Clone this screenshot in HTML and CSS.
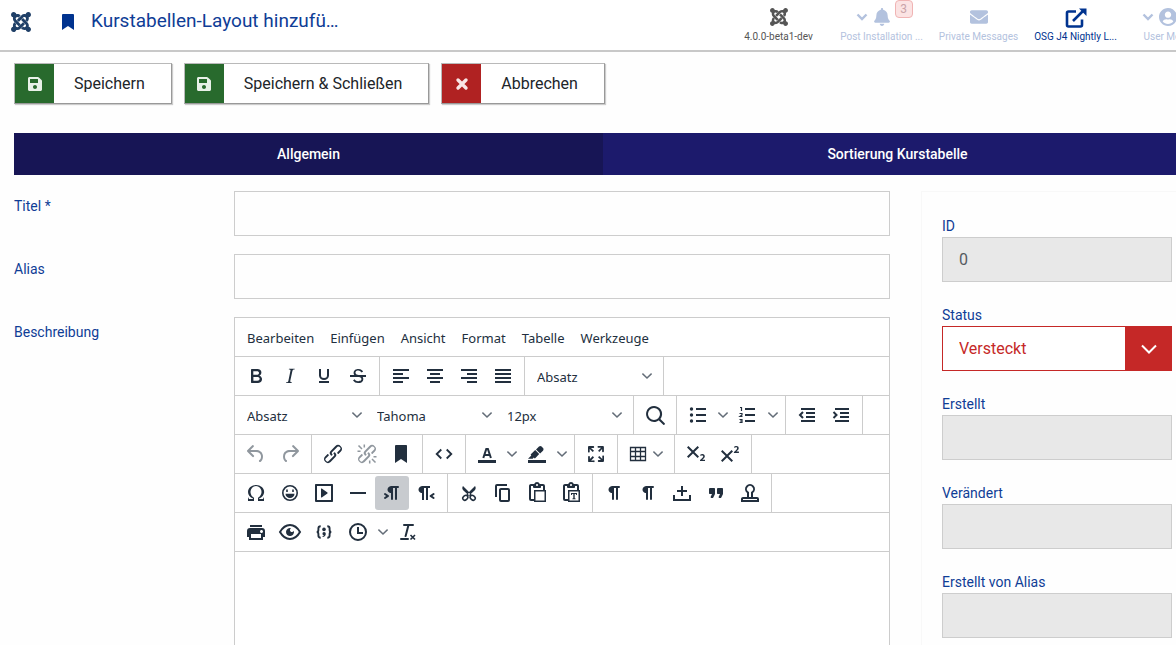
FILE: index.html
```
<!DOCTYPE html>
<html lang="de">
<head>
<meta charset="utf-8">
<title>Kurstabellen-Layout hinzufügen</title>
<link rel="stylesheet" href="styles.css">
</head>
<body>
<svg class="sprite" aria-hidden="true">
  <symbol id="joomla" viewBox="0 32 448 448"><path d="M.6 92.1C.6 58.8 27.4 32 60.4 32c30 0 54.5 21.9 59.2 50.2 32.6-7.6 67.1.6 96.5 30l-44.3 44.3c-20.5-20.5-42.6-16.3-55.4-3.5-14.3 14.3-14.3 37.9 0 52.2l99.5 99.5-44 44.3c-87.7-87.2-49.7-49.7-99.8-99.7-26.8-26.5-35-64.8-24.8-98.9C20.4 144.6.6 120.7.6 92.1zm129.5 116.4l44.3 44.3c10-10 89.7-89.7 99.7-99.8 14.3-14.3 37.6-14.3 51.9 0 12.8 12.8 17 35-3.5 55.4l44 44.3c31.2-31.2 38.5-67.6 28.9-101.2 29.2-4.1 51.9-29.2 51.9-59.5 0-33.2-26.8-60.1-59.8-60.1-30.3 0-55.4 22.5-59.5 51.6-33.8-9.9-71.7-1.5-98.3 25.1-18.3 19.1-71.1 71.5-99.6 99.9zm266.3 152.2c8.2-32.7-.9-68.5-26.3-93.9-11.8-12.2 5 4.7-99.5-99.7l-44.3 44.3 99.7 99.7c14.3 14.3 14.3 37.6 0 51.9-12.8 12.8-35 17-55.4-3.5l-44 44.3c27.6 30.2 68 38.8 102.7 28 5.5 27.4 29.7 48.1 58.9 48.1 33 0 59.8-26.8 59.8-60.1 0-30.2-22.5-55-51.6-59.1zm-84.3-53.1l-44-44.3c-87 86.4-50.4 50.4-99.7 99.8-14.3 14.3-37.6 14.3-51.9 0-13.1-13.4-16.9-35.3 3.2-55.4l-44-44.3c-30.2 30.2-38 65.2-29.5 98.3-26.7 6-46.2 29.9-46.2 58.2C0 453.2 26.8 480 59.8 480c28.6 0 52.5-19.8 58.6-46.7 32.7 8.2 68.5-.6 94.2-26 32.1-32 12.2-12.4 99.5-99.7z"/></symbol>
  <symbol id="save" viewBox="0 32 448 448"><path d="M433.9 129.9l-83.9-83.8A48 48 0 0 0 316.100 32H48C21.500 32 0 53.500 0 80v352c0 26.500 21.500 48 48 48h352c26.500 0 48-21.500 48-48V163.900a48 48 0 0 0-14.100-34zM224 416c-35.300 0-64-28.700-64-64s28.700-64 64-64 64 28.700 64 64-28.700 64-64 64zm96-304.500V212c0 6.600-5.400 12-12 12H76c-6.600 0-12-5.400-12-12V108c0-6.600 5.400-12 12-12h228.500c3.200 0 6.200 1.300 8.500 3.500l3.500 3.500c2.200 2.200 3.500 5.300 3.500 8.500z"/></symbol>
  <symbol id="chev" viewBox="0 0 10 10"><path d="M.4 2.500 5 7l4.600-4.500" fill="none" stroke="currentColor" stroke-width="1.500"/></symbol>
  <symbol id="chevbold" viewBox="0 0 12 12"><path d="M1.500 3.500 6 8l4.500-4.500" fill="none" stroke="currentColor" stroke-width="2.400"/></symbol>
  <symbol id="pilcrow" viewBox="0 0 24 24"><path d="M10 5h7a1 1 0 010 2h-1v11a1 1 0 01-2 0V7h-2v11a1 1 0 01-2 0v-6c-.5 0-1 0-1.400-.3A3.400 3.400 0 016.800 10a3.300 3.300 0 010-2.800 3.400 3.400 0 011.800-1.800L10 5z"/></symbol>
  <symbol id="paste" viewBox="0 0 24 24"><path fill-rule="evenodd" d="M18 9V5h-2v1c0 .6-.4 1-1 1H9a1 1 0 01-1-1V5H6v13h3V9h9zM9 20H6a2 2 0 01-2-2V5c0-1.100.9-2 2-2h3.200A3 3 0 0112 1a3 3 0 012.800 2H18a2 2 0 012 2v4h1v12H9v-1zm1.500-9.500v9h9v-9h-9zM12 3a1 1 0 00-1 1c0 .5.4 1 1 1s1-.5 1-1-.4-1-1-1z"/></symbol>
  <symbol id="chain" viewBox="0 0 24 24"><path d="M6.200 12.300a1 1 0 011.400 1.400l-2.100 2a2 2 0 102.700 2.800l4.800-4.800a1 1 0 000-1.400 1 1 0 111.400-1.300 2.900 2.900 0 010 4L9.600 20a3.900 3.900 0 01-5.500-5.500l2-2zm11.600-.6a1 1 0 01-1.400-1.400l2-2a2 2 0 10-2.600-2.800L11 10.300a1 1 0 000 1.400A1 1 0 119.600 13a2.900 2.900 0 010-4L14.400 4a3.900 3.900 0 015.500 5.500l-2 2z"/></symbol>
</svg>

<header class="header">
  <a class="logo" href="#" aria-label="Joomla"><svg><use href="#joomla"/></svg></a>
  <svg class="title-icon" viewBox="0 0 12 16"><path d="M1 0h10a1 1 0 0 1 1 1v15l-6-4-6 4V1a1 1 0 0 1 1-1z"/></svg>
  <h1 class="title">Kurstabellen-Layout hinzufü…</h1>
  <nav class="status">
    <span class="status-item version"><svg class="status-icon"><use href="#joomla"/></svg><span>4.0.0-beta1-dev</span></span>
    <button class="status-item faded" type="button">
      <svg class="status-icon" viewBox="0 0 448 512"><path d="M224 512c35.300 0 64-28.700 64-64H160c0 35.300 28.700 64 64 64zm215.400-149.700c-19.300-20.800-55.500-52-55.500-154.300 0-77.700-54.500-139.900-127.900-155.200V32c0-17.700-14.300-32-32-32s-32 14.300-32 32v20.800C118.600 68.100 64.100 130.300 64.100 208c0 102.300-36.200 133.500-55.500 154.300-6 6.400-8.700 14.200-8.600 21.700.1 16.400 13 32 32.100 32h383.800c19.100 0 32-15.600 32.100-32 .1-7.500-2.600-15.300-8.600-21.700z"/></svg>
      <span>Post Installation ...</span>
      <svg class="caret"><use href="#chevbold"/></svg><span class="badge">3</span>
    </button>
    <a class="status-item faded" href="#">
      <svg class="status-icon" viewBox="0 64 512 384"><path d="M502.300 190.800c3.900-3.100 9.700-.2 9.700 4.700V400c0 26.500-21.500 48-48 48H48c-26.500 0-48-21.500-48-48V195.600c0-5 5.700-7.800 9.700-4.700 22.400 17.400 52.100 39.500 154.100 113.600 21.100 15.400 56.700 47.800 92.200 47.600 35.700.3 72-32.800 92.300-47.600 102-74.100 131.600-96.300 154-113.700zM256 320c23.200.4 56.600-29.200 73.400-41.400 132.700-96.300 142.800-104.700 173.400-128.700 5.800-4.500 9.200-11.500 9.200-18.900v-19c0-26.500-21.500-48-48-48H48c-26.500 0-48 21.500-48 48v19c0 7.400 3.400 14.300 9.200 18.900 30.600 23.900 40.700 32.400 173.400 128.700 16.800 12.200 50.200 41.800 73.400 41.400z"/></svg>
      <span>Private Messages</span>
    </a>
    <a class="status-item site" href="#">
      <svg class="status-icon wide" viewBox="0 0 22 20"><path d="M17 11.500V17a1.500 1.500 0 0 1-1.500 1.500h-12A1.500 1.500 0 0 1 2 17V5a1.500 1.500 0 0 1 1.500-1.500H11M8 13 18.500 2.500" fill="none" stroke="currentColor" stroke-width="2.600"/><path d="M14 .5h7.500V8z"/></svg>
      <span>OSG J4 Nightly L...</span>
    </a>
    <button class="status-item user faded" type="button">
      <svg class="status-icon" viewBox="0 8 496 496"><path d="M248 8C111 8 0 119 0 256s111 248 248 248 248-111 248-248S385 8 248 8zm0 96c48.600 0 88 39.400 88 88s-39.400 88-88 88-88-39.400-88-88 39.400-88 88-88zm0 344c-58.700 0-111.300-26.600-146.500-68.200 18.800-35.400 55.600-59.800 98.500-59.800 2.400 0 4.800.4 7.100 1.100 13 4.200 26.600 6.900 40.900 6.900s28-2.700 40.900-6.900c2.300-.7 4.700-1.100 7.100-1.100 42.900 0 79.700 24.400 98.500 59.800C359.300 421.400 306.700 448 248 448z"/></svg>
      <span>User Menu</span>
      <svg class="caret"><use href="#chevbold"/></svg>
    </button>
  </nav>
</header>

<main class="content">
  <div class="actions">
    <button class="action save" type="button"><span class="action-icon"><svg><use href="#save"/></svg></span><span class="action-text">Speichern</span></button>
    <button class="action save" type="button"><span class="action-icon"><svg><use href="#save"/></svg></span><span class="action-text">Speichern &amp; Schließen</span></button>
    <button class="action cancel" type="button"><span class="action-icon"><svg viewBox="0 0 14 14"><path d="m3 3 8 8M11 3l-8 8" stroke="currentColor" stroke-width="3.400" stroke-linecap="round"/></svg></span><span class="action-text">Abbrechen</span></button>
  </div>

  <div class="tabs" role="tablist">
    <button class="tab active" type="button" role="tab" aria-selected="true">Allgemein</button>
    <button class="tab" type="button" role="tab" aria-selected="false">Sortierung Kurstabelle</button>
  </div>

  <form class="form">
    <div class="fields">
      <label for="title">Titel *</label><input id="title" class="text" type="text">
      <label for="alias">Alias</label><input id="alias" class="text" type="text">
      <label for="desc">Beschreibung</label>
      <div class="editor">
        <div class="menubar">
          <button type="button">Bearbeiten</button><button type="button">Einfügen</button><button type="button">Ansicht</button><button type="button">Format</button><button type="button">Tabelle</button><button type="button">Werkzeuge</button>
        </div>
        <div class="row">
          <div class="group">
            <button class="tool" type="button" aria-label="Fett"><svg viewBox="0 0 24 24"><path fill-rule="evenodd" d="M7.800 19c-.3 0-.5 0-.6-.2l-.2-.5V5.700c0-.2 0-.4.2-.5l.6-.2h5c1.500 0 2.700.3 3.500 1 .7.6 1.100 1.400 1.100 2.500a3 3 0 01-.6 1.900c-.4.6-1 1-1.600 1.200.4.1.9.3 1.300.6s.8.7 1 1.200c.4.4.5 1 .5 1.600 0 1.300-.4 2.300-1.300 3-.8.7-2.100 1-3.800 1H7.800zm5-8.300c.6 0 1.200-.1 1.600-.5.4-.3.6-.7.6-1.300 0-1.100-.8-1.700-2.300-1.700H9.300v3.500h3.400zm.5 6c.7 0 1.300-.1 1.700-.4.4-.4.6-.9.6-1.500s-.2-1-.7-1.400c-.4-.3-1-.4-2-.4H9.400v3.800h4z"/></svg></button>
            <button class="tool" type="button" aria-label="Kursiv"><svg viewBox="0 0 24 24"><path d="M16.700 4.700l-.1.9h-.3c-.6 0-1 0-1.400.3-.3.3-.4.6-.5 1.100l-2.100 9.800v.6c0 .5.4.8 1.400.8h.2l-.2.8H8l.2-.8h.2c1.100 0 1.800-.5 2-1.500l2-9.800.1-.5c0-.6-.4-.8-1.400-.8h-.3l.2-.9h5.700z"/></svg></button>
            <button class="tool" type="button" aria-label="Unterstrichen"><svg viewBox="0 0 24 24"><path d="M8 5v6.500a4 3.500 0 0 0 8 0V5" fill="none" stroke="currentColor" stroke-width="2"/><path d="M7 17h10v2H7z"/></svg></button>
            <button class="tool" type="button" aria-label="Durchgestrichen"><svg viewBox="0 0 24 24"><path d="M15.600 8.500c-.5-.7-1-1.100-1.300-1.300-.6-.4-1.300-.6-2-.6-2.700 0-2.800 1.700-2.800 2.100 0 1.600 1.800 2 3.200 2.300 4.400.9 4.600 2.800 4.600 3.900 0 1.400-.7 4.100-5 4.100A6.200 6.200 0 017 16.400l1.500-1.100c.4.6 1.600 2 3.700 2 1.600 0 2.500-.4 3-1.200.4-.8.3-2-.8-2.600-.7-.4-1.600-.7-2.900-1-1-.2-3.900-.8-3.900-3.600C7.600 6 10.300 5 12.400 5c2.900 0 4.200 1.600 4.700 2.400l-1.500 1.100z"/><path d="M4 11h16v2H4z"/></svg></button>
          </div>
          <div class="group">
            <button class="tool" type="button" aria-label="Linksbündig"><svg viewBox="0 0 24 24"><path d="M4 5h16v2H4zM4 9h10v2H4zM4 13h16v2H4zM4 17h10v2H4z"/></svg></button>
            <button class="tool" type="button" aria-label="Zentriert"><svg viewBox="0 0 24 24"><path d="M4 5h16v2H4zM7 9h10v2H7zM4 13h16v2H4zM7 17h10v2H7z"/></svg></button>
            <button class="tool" type="button" aria-label="Rechtsbündig"><svg viewBox="0 0 24 24"><path d="M4 5h16v2H4zM10 9h10v2H10zM4 13h16v2H4zM10 17h10v2H10z"/></svg></button>
            <button class="tool" type="button" aria-label="Blocksatz"><svg viewBox="0 0 24 24"><path d="M4 5h16v2H4zM4 9h16v2H4zM4 13h16v2H4zM4 17h16v2H4z"/></svg></button>
          </div>
          <div class="group">
            <span class="pick"><select aria-label="Stil"><option>Absatz</option></select><svg><use href="#chev"/></svg></span>
          </div>
        </div>
        <div class="row">
          <div class="group">
            <span class="pick"><select aria-label="Block"><option>Absatz</option></select><svg><use href="#chev"/></svg></span>
            <span class="pick"><select aria-label="Schriftart"><option>Tahoma</option></select><svg><use href="#chev"/></svg></span>
            <span class="pick"><select aria-label="Schriftgröße"><option>12px</option></select><svg><use href="#chev"/></svg></span>
          </div>
          <div class="group">
            <button class="tool" type="button" aria-label="Suchen"><svg viewBox="0 0 24 24"><path fill-rule="evenodd" d="M16 17.300a8 8 0 111.400-1.400l4.300 4.400a1 1 0 01-1.400 1.400l-4.400-4.300zm-5-.3a6 6 0 100-12 6 6 0 000 12z"/></svg></button>
          </div>
          <div class="group">
            <button class="tool split" type="button" aria-label="Aufzählung"><svg viewBox="0 0 24 24"><path d="M10 5h10v2H10zM10 11h10v2H10zM10 17h10v2H10z"/><circle cx="5.500" cy="6" r="1.700"/><circle cx="5.500" cy="12" r="1.700"/><circle cx="5.500" cy="18" r="1.700"/></svg><svg class="down"><use href="#chev"/></svg></button>
            <button class="tool split" type="button" aria-label="Nummerierte Liste"><svg viewBox="0 0 24 24"><path d="M9 5h10v2H9zM9 11h10v2H9zM9 17h10v2H9z"/><path d="M4 4.500h1.500V8M3.500 10.500H6V12l-2 1.500h2.500M3.500 16.500H6v3H3.500M4 18h2" fill="none" stroke="currentColor" stroke-width="1.200"/></svg><svg class="down"><use href="#chev"/></svg></button>
          </div>
          <div class="group">
            <button class="tool" type="button" aria-label="Ausrücken"><svg viewBox="0 0 24 24"><path d="M6 5h14v2H6zM11 9h9v2h-9zM11 13h9v2h-9zM6 17h14v2H6z"/><path d="m8 9-3 3 3 3" fill="none" stroke="currentColor" stroke-width="2"/></svg></button>
            <button class="tool" type="button" aria-label="Einrücken"><svg viewBox="0 0 24 24"><path d="M6 5h14v2H6zM11 9h9v2h-9zM11 13h9v2h-9zM6 17h14v2H6z"/><path d="m4.500 9 3 3-3 3" fill="none" stroke="currentColor" stroke-width="2"/></svg></button>
          </div>
        </div>
        <div class="row">
          <div class="group">
            <button class="tool" type="button" aria-label="Rückgängig" disabled><svg viewBox="0 0 24 24"><path d="M6.400 8H12c3.700 0 6.200 2 6.800 5.100.6 2.700-.4 5.600-2.300 6.800a1 1 0 01-1-1.800c1.100-.6 1.800-2.700 1.400-4.600-.5-2.100-2.100-3.500-4.900-3.500H6.400l3.300 3.300a1 1 0 11-1.400 1.400l-5-5a1 1 0 010-1.400l5-5a1 1 0 011.400 1.400L6.400 8z"/></svg></button>
            <button class="tool" type="button" aria-label="Wiederholen" disabled><svg viewBox="0 0 24 24"><path transform="matrix(-1 0 0 1 24 0)" d="M6.400 8H12c3.700 0 6.200 2 6.800 5.100.6 2.700-.4 5.600-2.300 6.800a1 1 0 01-1-1.800c1.100-.6 1.800-2.700 1.400-4.600-.5-2.100-2.100-3.500-4.900-3.500H6.400l3.300 3.300a1 1 0 11-1.400 1.400l-5-5a1 1 0 010-1.400l5-5a1 1 0 011.400 1.400L6.400 8z"/></svg></button>
          </div>
          <div class="group">
            <button class="tool" type="button" aria-label="Link"><svg><use href="#chain"/></svg></button>
            <button class="tool" type="button" aria-label="Link entfernen" disabled><svg viewBox="0 0 24 24"><use href="#chain" width="24" height="24"/><path d="M3.500 3.500 7 7M2.500 9.300H5.500M9.300 2.500V5.500M17 17l3.500 3.500M14.700 18.500v3M18.500 14.700h3" fill="none" stroke="currentColor" stroke-width="1.500"/></svg></button>
            <button class="tool" type="button" aria-label="Anker"><svg viewBox="0 0 24 24"><path d="M6 4v17l6-4 6 4V4c0-.6-.4-1-1-1H7a1 1 0 00-1 1z"/></svg></button>
          </div>
          <div class="group">
            <button class="tool" type="button" aria-label="Quelltext"><svg viewBox="0 0 24 24"><path d="M9.300 7.500 4.700 12l4.600 4.500M14.700 7.500l4.600 4.500-4.600 4.500" fill="none" stroke="currentColor" stroke-width="1.800"/></svg></button>
          </div>
          <div class="group">
            <button class="tool split" type="button" aria-label="Textfarbe"><svg viewBox="0 0 24 24"><path d="M3 18h18v3H3z"/><path d="M8.300 16 11.300 6.900h1.600l3 9.100M9.500 13h5" fill="none" stroke="currentColor" stroke-width="2"/></svg><svg class="down"><use href="#chev"/></svg></button>
            <button class="tool split" type="button" aria-label="Hintergrundfarbe"><svg viewBox="0 0 24 24"><path d="M3 18h18v3H3zM7.700 16.700H3l3.300-3.300-.7-.8L10.200 8l4 4.100-4 4.200c-.2.2-.6.2-.8 0l-.6-.7-1.100 1.100zM11 7.400l3-2.900a2 2 0 012.600 0L18 6c.7.7.7 2 0 2.700l-2.900 2.900z"/></svg><svg class="down"><use href="#chev"/></svg></button>
          </div>
          <div class="group">
            <button class="tool" type="button" aria-label="Vollbild"><svg viewBox="0 0 24 24"><path d="M15.300 10l-1.200-1.300 2.900-3h-2.300a.9.9 0 110-1.700H19c.5 0 .9.4.9.9v4.400a.9.9 0 11-1.800 0V7l-2.800 3zm0 4l3 3v-2.300a.9.9 0 111.700 0V19c0 .5-.4.9-.9.9h-4.400a.9.9 0 110-1.800H17l-3-2.900 1.300-1.200zM10 15.400l-2.900 3h2.300a.9.9 0 110 1.700H5a.9.9 0 01-.9-.9v-4.400a.9.9 0 111.800 0V17l2.900-3 1.200 1.400zM8.700 10L5.700 7v2.300a.9.9 0 11-1.700 0V5c0-.5.4-.9.9-.9h4.400a.9.9 0 010 1.800H7l3 2.900-1.300 1.200z"/></svg></button>
          </div>
          <div class="group">
            <button class="tool split table" type="button" aria-label="Tabelle"><svg viewBox="0 0 24 24"><path d="M4.500 5.500h15v13h-15zM4.500 9.500h15M4.500 14.500h15M9.500 5.500v13M14.500 5.500v13" fill="none" stroke="currentColor" stroke-width="1.300"/></svg><svg class="down"><use href="#chev"/></svg></button>
          </div>
          <div class="group">
            <button class="tool" type="button" aria-label="Tiefgestellt"><svg viewBox="0 0 24 24"><path d="M10.400 10l4.600 4.600-1.400 1.400L9 11.400 4.400 16 3 14.600 7.600 10 3 5.400 4.400 4 9 8.600 13.600 4 15 5.400 10.400 10zM21 19h-5v-1l1-.8 1.700-1.600c.3-.4.5-.8.5-1.200 0-.3 0-.6-.2-.7-.2-.2-.5-.3-.9-.3a2 2 0 00-.8.2l-.7.3-.4-1.100 1-.6 1.200-.2c.8 0 1.400.3 1.800.7.4.4.6.9.6 1.500s-.2 1.100-.5 1.600a8 8 0 01-1.300 1.300l-.6.6H21V19z"/></svg></button>
            <button class="tool" type="button" aria-label="Hochgestellt"><svg viewBox="0 0 24 24"><path d="M15 9.400L10.400 14l4.600 4.600-1.400 1.400L9 15.400 4.400 20 3 18.600 7.600 14 3 9.400 4.400 8 9 12.600 13.600 8 15 9.400zm5.900 1.600h-5v-1l1-.8 1.700-1.600c.3-.5.5-.9.5-1.300 0-.3 0-.5-.2-.7-.2-.2-.5-.3-.9-.3l-.8.2-.7.4-.4-1.200c.2-.2.5-.4 1-.5.3-.2.8-.2 1.200-.2.8 0 1.400.2 1.800.6.4.4.6 1 .6 1.600 0 .5-.2 1-.5 1.500l-1.300 1.400-.6.5h2.600V11z"/></svg></button>
          </div>
        </div>
        <div class="row">
          <div class="group">
            <button class="tool" type="button" aria-label="Sonderzeichen"><svg viewBox="0 0 24 24"><path d="M15 18h4l1-2v4h-6v-3.300l1.400-1a6 6 0 001.800-2.900 6.300 6.300 0 00-.1-4.100 5.800 5.800 0 00-3-3.200c-.6-.3-1.300-.5-2.100-.5a5.100 5.100 0 00-3.900 1.800 6.300 6.300 0 00-1.300 6 6.200 6.200 0 001.800 3l1.400.9V20H4v-4l1 2h4v-.5l-2-1L5.400 15A6.500 6.500 0 014 11c0-1 .2-1.900.6-2.700A7 7 0 016.300 6C7.100 5.400 8 5 9 4.500c1-.3 2-.5 3.100-.5a8.800 8.800 0 015.700 2 7 7 0 011.700 2.300 6 6 0 01.2 4.800c-.2.7-.6 1.300-1 1.900a7.600 7.600 0 01-3.600 2.500v.5z"/></svg></button>
            <button class="tool" type="button" aria-label="Emoticons"><svg viewBox="0 0 24 24"><circle cx="12" cy="12" r="7.200" fill="none" stroke="currentColor" stroke-width="1.600"/><path d="M8.200 8.500h1.600V11H8.200zM14.200 8.500h1.600V11h-1.600zM7.500 12.800h9a4.500 4.300 0 0 1-9 0z"/></svg></button>
            <button class="tool" type="button" aria-label="Medien"><svg viewBox="0 0 24 24"><path fill-rule="evenodd" d="M4 3h16c.6 0 1 .4 1 1v16c0 .6-.4 1-1 1H4a1 1 0 01-1-1V4c0-.6.4-1 1-1zm1 2v14h14V5H5zm4.800 2.600l5.600 4a.5.5 0 010 .8l-5.600 4A.5.5 0 019 16V8a.5.5 0 01.8-.4z"/></svg></button>
            <button class="tool" type="button" aria-label="Linie"><svg viewBox="0 0 24 24"><path d="M4 11h16v2H4z"/></svg></button>
            <button class="tool on" type="button" aria-label="Links nach rechts"><svg viewBox="0 0 24 24"><path d="M11 5h7a1 1 0 010 2h-1v11a1 1 0 01-2 0V7h-2v11a1 1 0 01-2 0v-6c-.5 0-1 0-1.400-.3A3.400 3.400 0 017.800 10a3.300 3.300 0 010-2.800 3.400 3.400 0 011.800-1.800L11 5zM4.400 16.200L6.200 15l-1.800-1.200a1 1 0 011.200-1.600l3 2a1 1 0 010 1.600l-3 2a1 1 0 11-1.200-1.600z"/></svg></button>
            <button class="tool" type="button" aria-label="Rechts nach links"><svg viewBox="0 0 24 24"><path d="M8 5h8v2h-2v12h-2V7h-2v12H8v-7c-.5 0-1 0-1.400-.3A3.400 3.400 0 014.800 10a3.300 3.300 0 010-2.800 3.400 3.400 0 011.800-1.800L8 5zm12.200 11.200a1 1 0 11-1.200 1.600l-3-2a1 1 0 010-1.600l3-2a1 1 0 111.200 1.600L18.400 15l1.800 1.200z"/></svg></button>
          </div>
          <div class="group">
            <button class="tool" type="button" aria-label="Ausschneiden"><svg viewBox="0 0 24 24"><path d="M6 5l6 6 6-6c1 1.400.9 3-.2 4.200L13.800 13l1.200 1.200-1.500 1.500L12 14.300l-1.500 1.400L9 14.200l1.200-1.200-4-3.800C5.100 8 5 6.400 6 5z"/><ellipse cx="8.300" cy="16.800" rx="2.800" ry="2.100" transform="rotate(-40 8.300 16.800)" fill="none" stroke="currentColor" stroke-width="1.500"/><ellipse cx="15.700" cy="16.800" rx="2.800" ry="2.100" transform="rotate(40 15.700 16.800)" fill="none" stroke="currentColor" stroke-width="1.500"/><circle class="hole" cx="12" cy="13" r=".9"/></svg></button>
            <button class="tool" type="button" aria-label="Kopieren"><svg viewBox="0 0 24 24"><path fill-rule="evenodd" d="M16 3H6a2 2 0 00-2 2v11h2V5h10V3zm1 4a2 2 0 012 2v10a2 2 0 01-2 2h-7a2 2 0 01-2-2V9c0-1.200.9-2 2-2h7zm0 12V9h-7v10h7z"/></svg></button>
            <button class="tool" type="button" aria-label="Einfügen"><svg><use href="#paste"/></svg></button>
            <button class="tool" type="button" aria-label="Als Text einfügen"><svg viewBox="0 0 24 24"><use href="#paste" width="24" height="24"/><path d="M12 12h6v2h-.8l-.4-.9h-1.100v4.100l.9.3v.7h-3.200v-.7l.9-.3v-4.100h-1.100l-.4.900H12z"/></svg></button>
          </div>
          <div class="group">
            <button class="tool" type="button" aria-label="Blöcke anzeigen"><svg><use href="#pilcrow"/></svg></button>
            <button class="tool" type="button" aria-label="Zeichen anzeigen"><svg><use href="#pilcrow"/></svg></button>
            <button class="tool" type="button" aria-label="Geschütztes Leerzeichen"><svg viewBox="0 0 24 24"><path d="M11 11H7V9h4V5h2v4h4v2h-4v4h-2zM3 14h2v4h14v-4h2v6H3z"/></svg></button>
            <button class="tool" type="button" aria-label="Zitat"><svg viewBox="0 0 24 24"><path d="M7.500 17h.9c.4 0 .7-.2.9-.6L11 13V8c0-.6-.4-1-1-1H6a1 1 0 00-1 1v4c0 .6.4 1 1 1h2l-1.300 2.700a1 1 0 00.8 1.300zm8 0h.9c.4 0 .7-.2.9-.6L19 13V8c0-.6-.4-1-1-1h-4a1 1 0 00-1 1v4c0 .6.4 1 1 1h2l-1.300 2.700a1 1 0 00.8 1.300z"/></svg></button>
            <button class="tool" type="button" aria-label="Vorlage"><svg viewBox="0 0 24 24"><path fill-rule="evenodd" d="M19 19v-1H5v1h14zM9 16v-4a5 5 0 116 0v4h4a2 2 0 012 2v3H3v-3c0-1.100.9-2 2-2h4zm4 0v-5l.8-.6a3 3 0 10-3.600 0l.8.6v5h2z"/></svg></button>
          </div>
        </div>
        <div class="row">
          <div class="group last">
            <button class="tool" type="button" aria-label="Drucken"><svg viewBox="0 0 24 24"><path fill-rule="evenodd" d="M18 8H6a3 3 0 00-3 3v6h2v3h14v-3h2v-6a3 3 0 00-3-3zm-1 10H7v-4h10v4zm.5-5c-.8 0-1.500-.7-1.500-1.500s.7-1.500 1.500-1.500 1.500.7 1.500 1.500-.7 1.500-1.500 1.500zM18 5H6v2h12V5z"/></svg></button>
            <button class="tool" type="button" aria-label="Vorschau"><svg viewBox="0 0 24 24"><path d="M2 12c2.500-4.300 6-7 10-7s7.500 2.700 10 7c-2.500 4.300-6 7-10 7s-7.500-2.700-10-7z" fill="none" stroke="currentColor" stroke-width="2"/><path d="M13.100 8.200a2 2 0 102.700 2.600 4 4 0 11-2.700-2.600z"/></svg></button>
            <button class="tool" type="button" aria-label="Codebeispiel"><svg viewBox="0 0 24 24"><path d="M8.700 6.200c-1.600 0-2.300.8-2.300 2.200V10c0 1.200-.6 2-1.700 2 1.100 0 1.700.8 1.700 2v1.600c0 1.400.7 2.200 2.300 2.200M15.300 6.200c1.600 0 2.300.8 2.300 2.200V10c0 1.200.6 2 1.700 2-1.100 0-1.700.8-1.700 2v1.600c0 1.400-.7 2.200-2.300 2.200" fill="none" stroke="currentColor" stroke-width="1.900"/><circle cx="12" cy="9.400" r="1.800"/><path d="M12 12a1.800 1.800 0 0 1 1.800 1.800c0 2-1.200 3.200-3.200 3.200v-1c.8 0 1.300-.3 1.500-.8a1.600 1.600 0 0 1-.1-3.200z"/></svg></button>
            <button class="tool split" type="button" aria-label="Datum"><svg viewBox="0 0 24 24"><circle cx="12" cy="12" r="8" fill="none" stroke="currentColor" stroke-width="2"/><path d="M11 7h2v5h4v2h-6z"/></svg><svg class="down"><use href="#chev"/></svg></button>
            <button class="tool" type="button" aria-label="Formatierung entfernen"><svg viewBox="0 0 24 24"><path d="M13.200 6a1 1 0 010 .2l-2.600 10a1 1 0 01-1 .8h-.2a.8.8 0 01-.8-1l2.600-10H8a1 1 0 110-2h9a1 1 0 010 2h-3.800zM5 18h7a1 1 0 010 2H5a1 1 0 010-2z"/><path d="m14.500 15 4.500 4.500M19 15l-4.500 4.500" stroke="currentColor" stroke-width="1.600"/></svg></button>
          </div>
        </div>
        <textarea id="desc" class="canvas"></textarea>
      </div>
    </div>

    <aside class="side">
      <div class="field"><label for="id">ID</label><input id="id" class="text" type="text" value="0" readonly></div>
      <div class="field"><label for="state">Status</label>
        <div class="state"><select id="state"><option>Versteckt</option></select><span class="state-arrow"><svg viewBox="0 0 16 16"><path d="m1 4.500 7 7 7-7" fill="none" stroke="currentColor" stroke-width="2"/></svg></span></div>
      </div>
      <div class="field"><label for="created">Erstellt</label><input id="created" class="text" type="text" readonly></div>
      <div class="field"><label for="modified">Verändert</label><input id="modified" class="text" type="text" readonly></div>
      <div class="field"><label for="by">Erstellt von Alias</label><input id="by" class="text" type="text" readonly></div>
    </aside>
  </form>
</main>
</body>
</html>
```
FILE: styles.css
```
* { box-sizing: border-box; }
body { margin: 0; height: 100vh; overflow: hidden; background: #fefefe; color: #212529; font-family: Roboto, sans-serif; font-size: 16px; }
button, input, select, textarea { font: inherit; color: inherit; margin: 0; border-radius: 0; }
button { border: 0; padding: 0; background: none; }
a { color: inherit; text-decoration: none; }
svg { display: block; fill: currentColor; flex: none; }
.sprite { position: absolute; width: 0; height: 0; }

.header { display: flex; align-items: center; height: 52px; border-bottom: 2px solid #c8c8c8; padding-left: 11px; background: #fff; }
.logo { color: #1f3f67; padding-bottom: 6px; }
.logo svg { width: 20px; height: 20px; }
.title-icon { width: 12px; height: 16px; margin: 0 17px 6px 31px; color: #00338f; }
.title { margin: 0; padding-bottom: 8px; font-size: 19px; font-weight: 400; line-height: 24px; color: #0f3d96; white-space: nowrap; }
.status { display: flex; align-self: stretch; margin: 0 -35px 0 auto; font-size: 10px; line-height: 12px; }
.status-item { position: relative; display: flex; flex-direction: column; align-items: center; width: 97px; padding-top: 8px; gap: 5px; white-space: nowrap; }
.status-icon { width: 18px; height: 18px; }
.status-icon.wide { width: 22px; height: 20px; margin-bottom: -2px; }
.status-item.version { width: 109px; color: #555; }
.status-item.user { width: 87px; }
.faded { color: #b3c2de; }
.site { color: #00338f; }
.caret { position: absolute; left: calc(50% - 26px); top: 11px; width: 12px; height: 12px; }
.badge { position: absolute; left: calc(50% + 13px); top: 0; width: 18px; height: 18px; border: 1px solid #f0b4b4; border-radius: 4px; background: #fbe3e3; color: #c9a3a9; font-size: 12px; line-height: 16px; text-align: center; }

.content { padding: 11px 0 0 14px; margin-right: -16px; }
.actions { display: flex; gap: 12px; }
.action { display: flex; height: 41px; border: 1px solid #b9b9b9; border-right-color: #999; border-bottom-color: #999; background: #fff; box-shadow: 1px 1px 1px #ccc; }
.action-icon { display: grid; place-items: center; width: 39px; height: 39px; color: #e8f1e8; background: #286a2d; }
.action-icon svg { width: 14px; height: 14px; }
.cancel .action-icon { background: #b02222; color: #f9e6e6; }
.action-text { padding: 0 26px 0 20px; line-height: 39px; }

.tabs { display: grid; grid-template-columns: 1fr 1fr; margin-top: 29px; background: #1c1a6c; }
.tab { height: 42px; color: #fff; font-size: 14px; font-weight: 500; }
.tab.active { background: #171555; }

.form { display: grid; grid-template-columns: minmax(0, 1fr) 271px; gap: 31px; align-items: start; margin-top: 16px; }
.fields { display: grid; grid-template-columns: 220px minmax(0, 1fr); row-gap: 18px; }
label { font-size: 14px; line-height: 22px; color: #0f3d96; }
.fields label { padding-top: 4px; }
.text { width: 100%; height: 45px; padding: 0 16px; border: 1px solid #cdcdcd; background: #fefefe; color: #555b61; outline: 0; }
.text[readonly] { background: #e8e8e8; }
.side { padding: 23px 20px 20px; border-left: 1px solid #f8f8f8; border-top: 1px solid #f8f8f8; }
.field { display: flex; flex-direction: column; margin-bottom: 22px; }
.state { display: grid; grid-template-columns: 1fr 47px; height: 45px; color: #c52827; }
.state select { grid-area: 1 / 1 / 2 / 3; appearance: none; border: 1px solid #c52827; background: #fff; padding: 0 16px; }
.state-arrow { grid-area: 1 / 2; display: grid; place-items: center; background: #c52827; color: #fff; pointer-events: none; }
.state-arrow svg { width: 16px; height: 16px; }

.editor { border: 1px solid #ccc; background: #fff; color: #222f3e; font-family: "Segoe UI", "Noto Sans", sans-serif; font-size: 13px; }
.menubar { display: flex; height: 39px; padding: 2px 4px 0; border-bottom: 1px solid #ccc; }
.menubar button { padding: 0 8px; }
.row { display: flex; height: 39px; border-bottom: 1px solid #ccc; }
.group { display: flex; padding: 0 4px; border-right: 1px solid #ccc; }
.group.last { border-right: 0; }
.tool { display: flex; align-items: center; width: 34px; height: 34px; margin-top: 2px; padding-left: 5px; border-radius: 3px; }
.tool svg { width: 24px; height: 24px; }
.tool.on { background: #c8cbcf; }
.tool:disabled { color: #222f3e80; }
.tool.split { width: 50px; gap: 8px; }
.tool.split.table { width: 48px; padding-left: 4px; gap: 3px; }
.tool .down { width: 10px; height: 10px; color: #222f3eb3; }
.hole { fill: #fff; }
.pick { display: grid; grid-template-columns: 1fr 17px; align-items: center; width: 130px; height: 38px; }
.pick select { grid-area: 1 / 1 / 2 / 3; height: 38px; appearance: none; border: 0; background: none; padding: 2px 8px 0; }
.pick svg { grid-area: 1 / 2; width: 10px; height: 10px; pointer-events: none; color: #222f3eb3; }
.canvas { display: block; width: 100%; height: 300px; border: 0; resize: none; outline: 0; }
```
